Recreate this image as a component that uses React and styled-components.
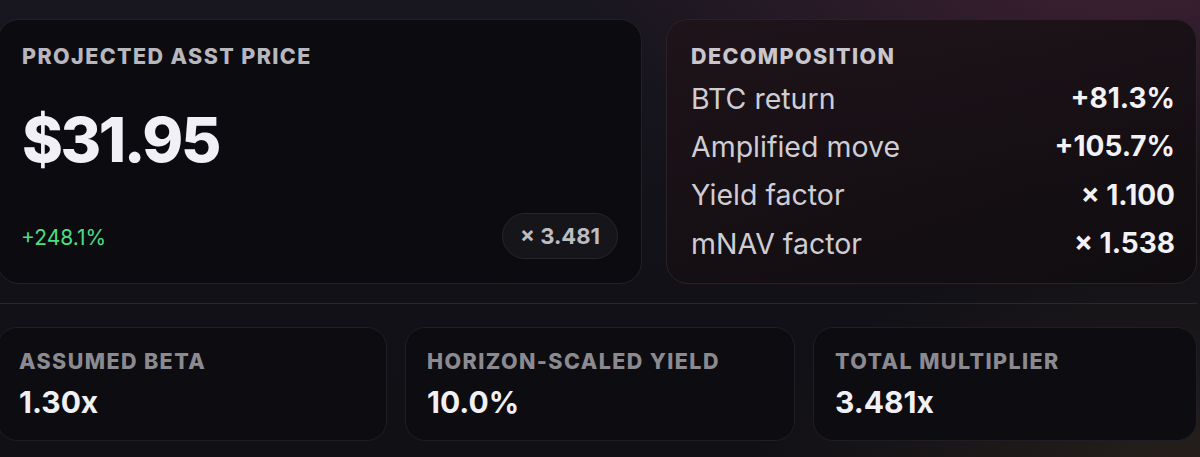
import React from "react";
import styled, { createGlobalStyle } from "styled-components";

const Global = createGlobalStyle`
  html, body { margin: 0; padding: 0; }
  body {
    width: 1200px;
    height: 457px;
    overflow: hidden;
    font-family: Inter, "Noto Sans", sans-serif;
    background:
      radial-gradient(ellipse 760px 300px at 1120px -20px, rgba(82, 38, 60, 0.62), transparent 72%),
      radial-gradient(ellipse 640px 320px at 1200px 470px, rgba(64, 50, 36, 0.45), transparent 70%),
      linear-gradient(180deg, #18161f 0%, #121117 60%, #111015 100%);
    color: #eeedf2;
  }
`;

const Page = styled.div`
  margin-left: -3px;
  width: 1200px;
  padding-top: 19px;
`;

const TopGrid = styled.div`
  display: grid;
  grid-template-columns: 645px 1fr;
  gap: 24px;
  height: 265px;
`;

const Card = styled.div`
  box-sizing: border-box;
  border-radius: 22px;
  border: 1px solid ${(p) => p.$border || "#222128"};
  background: ${(p) => p.$bg || "#0c0b10"};
`;

const PriceCard = styled(Card)`
  display: flex;
  flex-direction: column;
  padding: 24px 24px 24px 24px;
`;

const Label = styled.div`
  font-weight: 800;
  font-size: 21.5px;
  line-height: 24px;
  letter-spacing: 1.4px;
  text-transform: uppercase;
  color: ${(p) => p.$color || "#b9b7be"};
`;

const BigPrice = styled.div`
  margin-top: 37px;
  font-weight: 800;
  font-size: 62px;
  line-height: 70px;
  letter-spacing: -2.4px;
  color: #f1f0f6;
`;

const PriceFoot = styled.div`
  margin-top: auto;
  display: flex;
  align-items: center;
  justify-content: space-between;
`;

const Change = styled.span`
  font-size: 21px;
  color: #4ade80;
  margin-left: -1px;
  margin-top: 3px;
`;

const Pill = styled.span`
  box-sizing: border-box;
  height: 46px;
  padding: 0 17px;
  display: inline-flex;
  align-items: center;
  border-radius: 23px;
  border: 1px solid #26252b;
  background: #16151a;
  color: #bdbcc2;
  font-weight: 700;
  font-size: 22px;
  margin-right: -1px;
`;

const DecompCard = styled(Card)`
  padding: 24px 21px 0 24px;
  background: linear-gradient(160deg, rgba(30, 19, 25, 0.9), rgba(15, 12, 15, 0.92));
  border-color: #2a2227;
`;

const Rows = styled.div`
  margin-top: 6px;
  display: flex;
  flex-direction: column;
`;

const Row = styled.div`
  display: flex;
  justify-content: space-between;
  align-items: center;
  height: 48.3px;
  font-size: 28.5px;
`;

const RowName = styled.span`
  color: #cfcdd3;
`;

const RowValue = styled.span`
  font-weight: 700;
  font-size: 28px;
  color: #f2f1f5;
`;

const Divider = styled.div`
  margin-top: 19px;
  height: 1px;
  background: #29282e;
`;

const BottomGrid = styled.div`
  margin-top: 23px;
  display: grid;
  grid-template-columns: 390px 390px 1fr;
  gap: 18px;
  height: 114px;
`;

const StatCard = styled(Card)`
  padding: 21px 20px 0 21px;
  border-radius: 20px;
  background: #0d0c10;
  border-color: #1f1e24;
`;

const StatValue = styled.div`
  margin-top: 11px;
  font-weight: 700;
  font-size: 30px;
  line-height: 36px;
  color: #f1f0f5;
`;

const decomp = [
  ["BTC return", "+81.3%"],
  ["Amplified move", "+105.7%"],
  ["Yield factor", "× 1.100"],
  ["mNAV factor", "× 1.538"],
];

const stats = [
  ["Assumed Beta", "1.30x"],
  ["Horizon-Scaled Yield", "10.0%"],
  ["Total Multiplier", "3.481x"],
];

export default function App() {
  return (
    <>
      <Global />
      <Page>
        <TopGrid>
          <PriceCard>
            <Label>Projected ASST Price</Label>
            <BigPrice>$31.95</BigPrice>
            <PriceFoot>
              <Change>+248.1%</Change>
              <Pill>× 3.481</Pill>
            </PriceFoot>
          </PriceCard>
          <DecompCard>
            <Label $color="#c9c7cd">Decomposition</Label>
            <Rows>
              {decomp.map(([n, v]) => (
                <Row key={n}>
                  <RowName>{n}</RowName>
                  <RowValue>{v}</RowValue>
                </Row>
              ))}
            </Rows>
          </DecompCard>
        </TopGrid>
        <Divider />
        <BottomGrid>
          {stats.map(([l, v]) => (
            <StatCard key={l}>
              <Label $color="#8b8a90">{l}</Label>
              <StatValue>{v}</StatValue>
            </StatCard>
          ))}
        </BottomGrid>
      </Page>
    </>
  );
}
